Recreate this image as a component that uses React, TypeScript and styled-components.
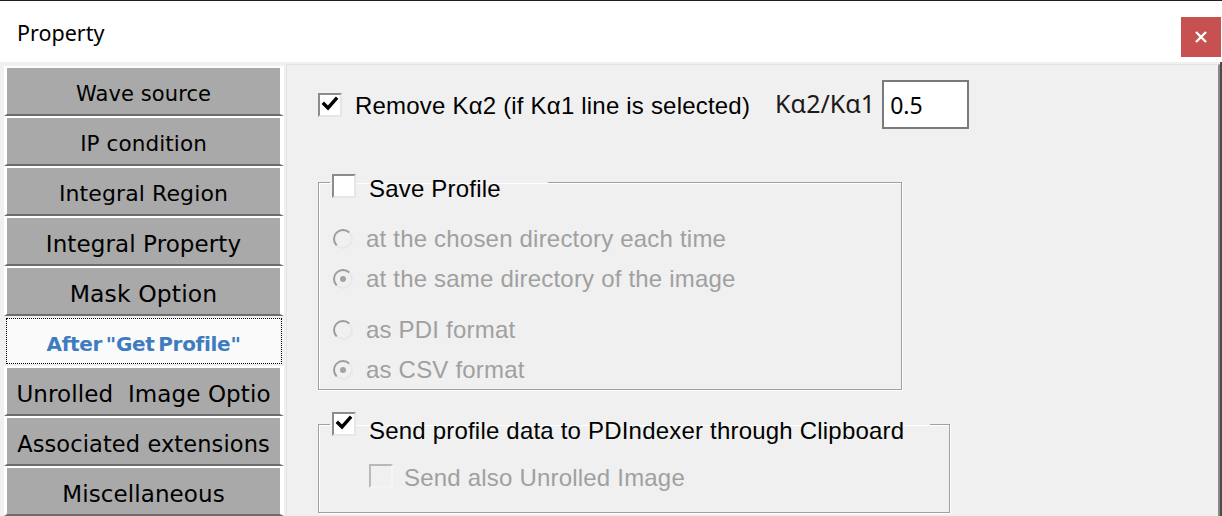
import styled, { createGlobalStyle } from 'styled-components'

const Global = createGlobalStyle`
  body {
    margin: 0;
    background: #fff;
  }
`

const Window = styled.div`
  width: 1222px;
  height: 516px;
  box-sizing: border-box;
  border-top: 1px solid #1f1f1f;
  display: flex;
  flex-direction: column;
  overflow: hidden;
  background: #fff;
`

const TitleBar = styled.div`
  height: 61px;
  flex: none;
  display: flex;
  justify-content: space-between;
  align-items: flex-start;
`

const Title = styled.div`
  padding: 17px 0 0 17px;
  font-family: 'Noto Sans', sans-serif;
  font-size: 21.5px;
  line-height: 30px;
  color: #000;
`

const CloseButton = styled.div`
  width: 40px;
  height: 40px;
  margin: 16px 1px 0 0;
  background: #c75050;
  display: flex;
  align-items: center;
  justify-content: center;
`

const Body = styled.div`
  flex: 1;
  display: flex;
  background: #f0f0f0;
  border-right: 2px solid #4b4b4b;
  min-height: 0;
`

const Sidebar = styled.div`
  width: 286px;
  flex: none;
  padding-top: 4px;
  display: flex;
  flex-direction: column;
`

const Tab = styled.div<{ $size: number; $selected?: boolean }>`
  margin-left: 4px;
  width: 280px;
  height: 50px;
  flex: none;
  box-sizing: border-box;
  padding-top: 5px;
  display: flex;
  align-items: center;
  justify-content: center;
  overflow: hidden;
  white-space: pre;
  font-family: 'DejaVu Sans', sans-serif;
  font-size: ${({ $size }) => $size}px;
  letter-spacing: 0.1px;
  border-style: solid;
  border-width: 2px 4px 2px 3px;
  border-color: #fff #fff #6d6d6d #fff;
  background: #a9a9a9;
  color: #000;

  ${({ $selected }) =>
    $selected &&
    `
    border-color: #f0f0f0;
    background: #fafafa;
    outline: 1px dotted #000;
    outline-offset: -3px;
    color: #3f7cbf;
    font-weight: bold;
    letter-spacing: -0.3px;
    word-spacing: -3px;
  `}
`

const Panel = styled.div`
  flex: 1;
  margin-top: 2px;
  border-top: 1px solid #e3e3e3;
  border-left: 1px solid #e3e3e3;
  border-right: 2px solid #8a8a8a;
  padding: 15px 0 0 31px;
  display: flex;
  flex-direction: column;
  align-items: flex-start;
  font-family: 'Liberation Sans', Arial, sans-serif;
  font-size: 24px;
  letter-spacing: 0.2px;
  color: #000;
`

const TopRow = styled.div`
  display: flex;
  align-items: center;
  height: 49px;
`

const CheckRow = styled.div<{ $gap?: number }>`
  display: flex;
  align-items: center;
  gap: ${({ $gap }) => $gap ?? 13}px;
`

const Box = styled.span<{ $disabled?: boolean }>`
  width: 24px;
  height: 24px;
  flex: none;
  box-sizing: border-box;
  border-style: solid;
  border-width: 2px;
  border-color: ${({ $disabled }) =>
    $disabled ? '#b9b9b9 #f4f4f4 #f4f4f4 #b9b9b9' : '#8c8c8c #e6e6e6 #e6e6e6 #8c8c8c'};
  background: ${({ $disabled }) => ($disabled ? '#f0f0f0' : '#fff')};
  display: flex;
  align-items: center;
  justify-content: center;
`

const Text = styled.span<{ $disabled?: boolean; $shift?: number }>`
  line-height: 28px;
  white-space: nowrap;
  color: ${({ $disabled }) => ($disabled ? '#a0a0a0' : '#000')};
  margin-top: ${({ $shift }) => $shift ?? 0}px;
`

const RatioLabel = styled.span`
  margin-left: 25px;
  font-family: 'Noto Sans', sans-serif;
  font-size: 25px;
  letter-spacing: 0;
  color: #1a1a1a;
  margin-top: -3px;
`

const RatioInput = styled.input`
  margin-left: 7px;
  width: 87px;
  height: 49px;
  box-sizing: border-box;
  border: 2px solid #7a7a7a;
  padding: 0 0 0 6px;
  background: #fff;
  font-family: 'Noto Sans', sans-serif;
  font-size: 23px;
  color: #000;
  outline: none;
`

const Group = styled.fieldset<{ $width: number; $top: number }>`
  margin: ${({ $top }) => $top}px 0 0 0;
  padding: 0;
  min-inline-size: 0;
  width: ${({ $width }) => $width}px;
  box-sizing: border-box;
  border: 1px solid #a0a0a0;
  box-shadow: inset 1px 1px 0 #fff, 1px 1px 0 #fff;
`

const Legend = styled.legend<{ $width: number; $height: number }>`
  margin-left: 11px;
  padding: 0 0 0 2px;
  width: ${({ $width }) => $width}px;
  height: ${({ $height }) => $height}px;
  box-sizing: border-box;
  display: flex;
  align-items: flex-start;
  gap: 13px;
`

const GroupBody = styled.div<{ $pad: string }>`
  padding: ${({ $pad }) => $pad};
  display: flex;
  flex-direction: column;
`

const OptionSet = styled.div`
  display: flex;
  flex-direction: column;
  gap: 4px;
  & + & {
    margin-top: 15px;
  }
`

const Option = styled.div`
  height: 36px;
  display: flex;
  align-items: center;
  gap: 13px;
`

const Radio = styled.span<{ $on?: boolean }>`
  width: 20px;
  height: 20px;
  flex: none;
  box-sizing: border-box;
  border-radius: 50%;
  border: 2px solid;
  border-color: #9c9c9c #e8e8e8 #e8e8e8 #9c9c9c;
  background: #f0f0f0;
  display: flex;
  align-items: center;
  justify-content: center;

  &::after {
    content: '';
    width: 6px;
    height: 6px;
    border-radius: 50%;
    background: ${({ $on }) => ($on ? '#a3a3a3' : 'transparent')};
  }
`

const Tick = () => (
  <svg width="18" height="18" viewBox="0 0 18 18">
    <polyline points="3,8 7,12 15,3" fill="none" stroke="#000" strokeWidth="3.4" strokeLinecap="square" />
  </svg>
)

const tabs = [
  { label: 'Wave source', size: 21 },
  { label: 'IP condition', size: 21.5 },
  { label: 'Integral Region', size: 22 },
  { label: 'Integral Property', size: 23 },
  { label: 'Mask Option', size: 23.5 },
  { label: 'After "Get Profile"', size: 20, selected: true },
  { label: 'Unrolled  Image Optio', size: 23 },
  { label: 'Associated extensions', size: 22.5 },
  { label: 'Miscellaneous', size: 23 },
]

export default function App() {
  return (
    <>
      <Global />
      <Window>
        <TitleBar>
          <Title>Property</Title>
          <CloseButton>
            <svg width="12" height="12" viewBox="0 0 12 12">
              <path d="M1 1 L11 11 M11 1 L1 11" stroke="#fff" strokeWidth="2.4" />
            </svg>
          </CloseButton>
        </TitleBar>
        <Body>
          <Sidebar>
            {tabs.map((t) => (
              <Tab key={t.label} $size={t.size} $selected={t.selected}>
                {t.label}
              </Tab>
            ))}
          </Sidebar>
          <Panel>
            <TopRow>
              <CheckRow>
                <Box>
                  <Tick />
                </Box>
                <Text $shift={3}>Remove Kα2 (if Kα1 line is selected)</Text>
              </CheckRow>
              <RatioLabel>Kα2/Kα1</RatioLabel>
              <RatioInput defaultValue="0.5" />
            </TopRow>

            <Group $width={584} $top={38}>
              <Legend $width={218} $height={31}>
                <Box style={{ marginTop: 7 }} />
                <Text $shift={8}>Save Profile</Text>
              </Legend>
              <GroupBody $pad="23px 0 1px 14px">
                <OptionSet>
                  <Option>
                    <Radio />
                    <Text $disabled>at the chosen directory each time</Text>
                  </Option>
                  <Option>
                    <Radio $on />
                    <Text $disabled>at the same directory of the image</Text>
                  </Option>
                </OptionSet>
                <OptionSet>
                  <Option>
                    <Radio />
                    <Text $disabled>as PDI format</Text>
                  </Option>
                  <Option>
                    <Radio $on />
                    <Text $disabled>as CSV format</Text>
                  </Option>
                </OptionSet>
              </GroupBody>
            </Group>

            <Group $width={632} $top={21}>
              <Legend $width={600} $height={26}>
                <Box style={{ marginTop: 1 }}>
                  <Tick />
                </Box>
                <Text $shift={6}>Send profile data to PDIndexer through Clipboard</Text>
              </Legend>
              <GroupBody $pad="23px 0 20px 50px">
                <CheckRow $gap={11}>
                  <Box $disabled />
                  <Text $disabled $shift={4}>
                    Send also Unrolled Image
                  </Text>
                </CheckRow>
              </GroupBody>
            </Group>
          </Panel>
        </Body>
      </Window>
    </>
  )
}
